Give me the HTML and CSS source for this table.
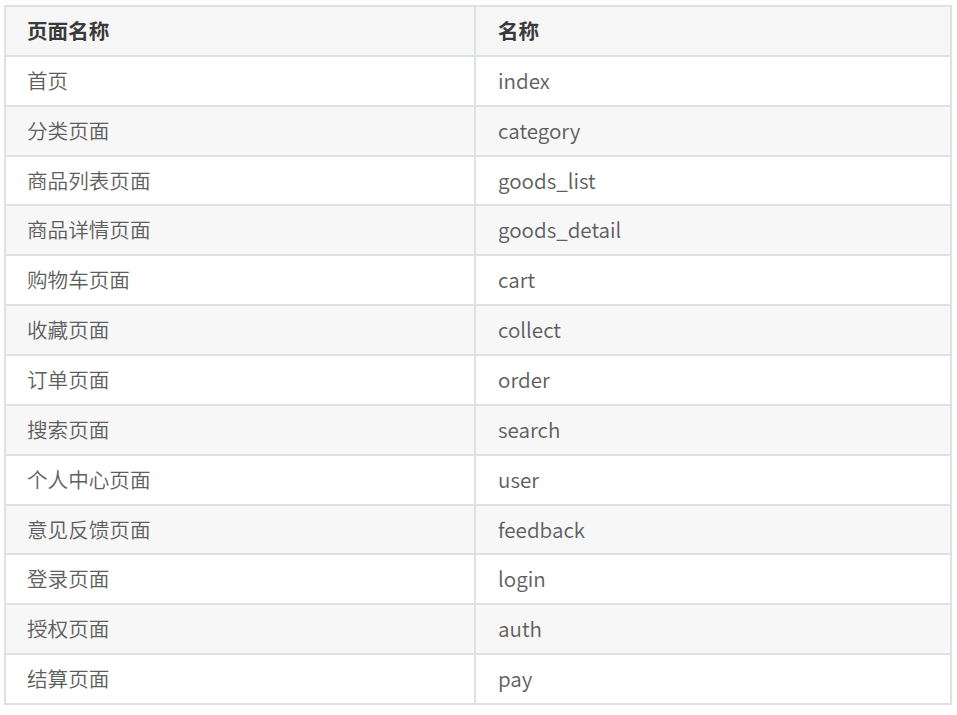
FILE: index.html
```html
<!DOCTYPE html>
<html lang="zh-CN">
<head>
<meta charset="utf-8">
<title>页面</title>
<link rel="stylesheet" href="styles.css">
</head>
<body>
<table class="pages">
  <thead>
    <tr><th>页面名称</th><th>名称</th></tr>
  </thead>
  <tbody>
    <tr><td>首页</td><td>index</td></tr>
    <tr><td>分类页面</td><td>category</td></tr>
    <tr><td>商品列表页面</td><td>goods_list</td></tr>
    <tr><td>商品详情页面</td><td>goods_detail</td></tr>
    <tr><td>购物车页面</td><td>cart</td></tr>
    <tr><td>收藏页面</td><td>collect</td></tr>
    <tr><td>订单页面</td><td>order</td></tr>
    <tr><td>搜索页面</td><td>search</td></tr>
    <tr><td>个人中心页面</td><td>user</td></tr>
    <tr><td>意见反馈页面</td><td>feedback</td></tr>
    <tr><td>登录页面</td><td>login</td></tr>
    <tr><td>授权页面</td><td>auth</td></tr>
    <tr><td>结算页面</td><td>pay</td></tr>
  </tbody>
</table>
</body>
</html>
```
FILE: styles.css
```css
html, body {
  margin: 0;
  padding: 0;
  background: #ffffff;
}
body {
  padding: 5px 0 0 4px;
  font-family: "Noto Sans CJK SC", "Noto Sans", sans-serif;
  font-size: 20.6px;
  color: #5e5e5e;
}
.pages {
  border-collapse: collapse;
  table-layout: fixed;
  width: 948px;
}
.pages th,
.pages td {
  border: 2px solid #dfe2e5;
  padding: 12px 21px;
  line-height: 23.86px;
  text-align: left;
  white-space: nowrap;
}
.pages td {
  font-weight: 350;
}
.pages th + th,
.pages td + td {
  padding-left: 22px;
}
.pages th:first-child {
  width: 426px;
}
.pages th {
  font-weight: 700;
  color: #3a3a3a;
  background: #f6f6f6;
}
.pages tbody tr:nth-child(2n) {
  background: #f7f7f7;
}
```
